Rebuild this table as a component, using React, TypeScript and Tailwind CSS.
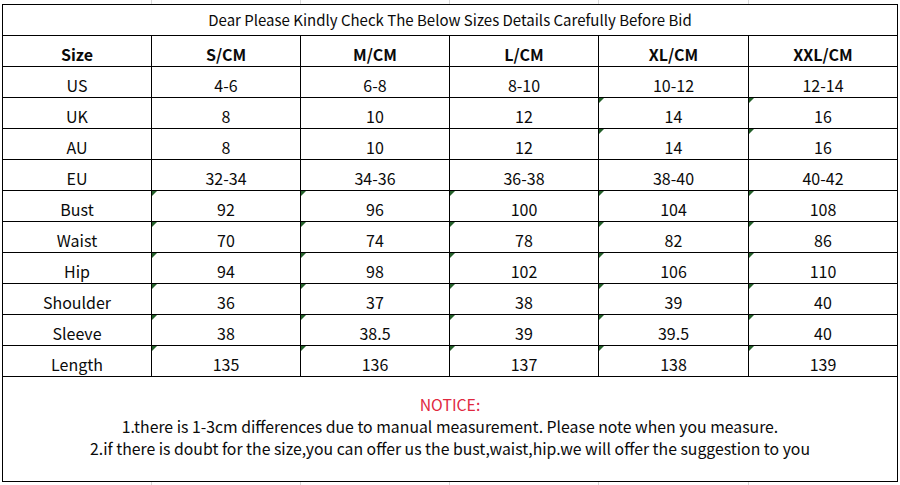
const cols = ["S/CM", "M/CM", "L/CM", "XL/CM", "XXL/CM"];

// flag: which columns carry the little green "number stored as text" marker
const rows: { label: string; values: string[]; marks: boolean[] }[] = [
  { label: "US", values: ["4-6", "6-8", "8-10", "10-12", "12-14"], marks: [false, false, false, false, false] },
  { label: "UK", values: ["8", "10", "12", "14", "16"], marks: [false, false, false, true, true] },
  { label: "AU", values: ["8", "10", "12", "14", "16"], marks: [false, false, false, true, true] },
  { label: "EU", values: ["32-34", "34-36", "36-38", "38-40", "40-42"], marks: [false, false, false, false, false] },
  { label: "Bust", values: ["92", "96", "100", "104", "108"], marks: [true, true, true, true, true] },
  { label: "Waist", values: ["70", "74", "78", "82", "86"], marks: [true, true, true, true, true] },
  { label: "Hip", values: ["94", "98", "102", "106", "110"], marks: [true, true, true, true, true] },
  { label: "Shoulder", values: ["36", "37", "38", "39", "40"], marks: [true, true, true, true, true] },
  { label: "Sleeve", values: ["38", "38.5", "39", "39.5", "40"], marks: [true, true, true, true, true] },
  { label: "Length", values: ["135", "136", "137", "138", "139"], marks: [true, true, true, true, true] },
];

const font = { fontFamily: '"Noto Sans CJK SC", "Noto Sans", sans-serif' };

function Gridlines() {
  // faint spreadsheet gridlines peeking out above and below the table
  return (
    <div className="h-[4px] ml-[3px] grid grid-cols-[149px_149px_149px_149px_150px_149px]">
      <div className="border-r border-[#d9d9d9]" />
      <div className="border-r border-[#d9d9d9]" />
      <div className="border-r border-[#d9d9d9]" />
      <div className="border-r border-[#d9d9d9]" />
      <div className="border-r border-[#d9d9d9]" />
      <div />
    </div>
  );
}

function Cell({ children, mark, bold }: { children: React.ReactNode; mark?: boolean; bold?: boolean }) {
  return (
    <div
      className={`relative h-[31px] border-r border-b border-black flex items-center justify-center pt-[6px] text-[16px] text-[#0a0a0a] ${
        bold ? "font-bold" : ""
      }`}
    >
      {mark && (
        <span className="absolute left-0 top-0 w-0 h-0 border-t-[5px] border-r-[5px] border-t-[#24602a] border-r-transparent" />
      )}
      {children}
    </div>
  );
}

export default function App() {
  return (
    <div className="w-[900px] h-[485px] bg-white overflow-hidden" style={font}>
      <Gridlines />

      <div className="ml-[2px] w-[896px] border-l border-t border-black">
        {/* Titre */}
        <div className="h-[31px] border-r border-b border-black flex items-center justify-center text-[15px] text-[#0a0a0a]">
          Dear Please Kindly Check The Below Sizes Details Carefully Before Bid
        </div>

        <div className="grid grid-cols-[149px_149px_149px_149px_150px_149px]">
          <Cell bold>Size</Cell>
          {cols.map((c) => (
            <Cell key={c} bold>
              {c}
            </Cell>
          ))}

          {rows.map((r) => (
            <>
              <Cell key={r.label}>{r.label}</Cell>
              {r.values.map((v, i) => (
                <Cell key={r.label + i} mark={r.marks[i]}>
                  {v}
                </Cell>
              ))}
            </>
          ))}
        </div>

        {/* Notice */}
        <div className="h-[105px] border-r border-b border-black flex flex-col items-center pt-[17px] text-[15.8px] leading-[22px] text-[#0a0a0a]">
          <p className="text-[#e0283f]">NOTICE:</p>
          <p>1.there is 1-3cm differences due to manual measurement. Please note when you measure.</p>
          <p>2.if there is doubt for the size,you can offer us the bust,waist,hip.we will offer the suggestion to you</p>
        </div>
      </div>

      <Gridlines />
    </div>
  );
}
